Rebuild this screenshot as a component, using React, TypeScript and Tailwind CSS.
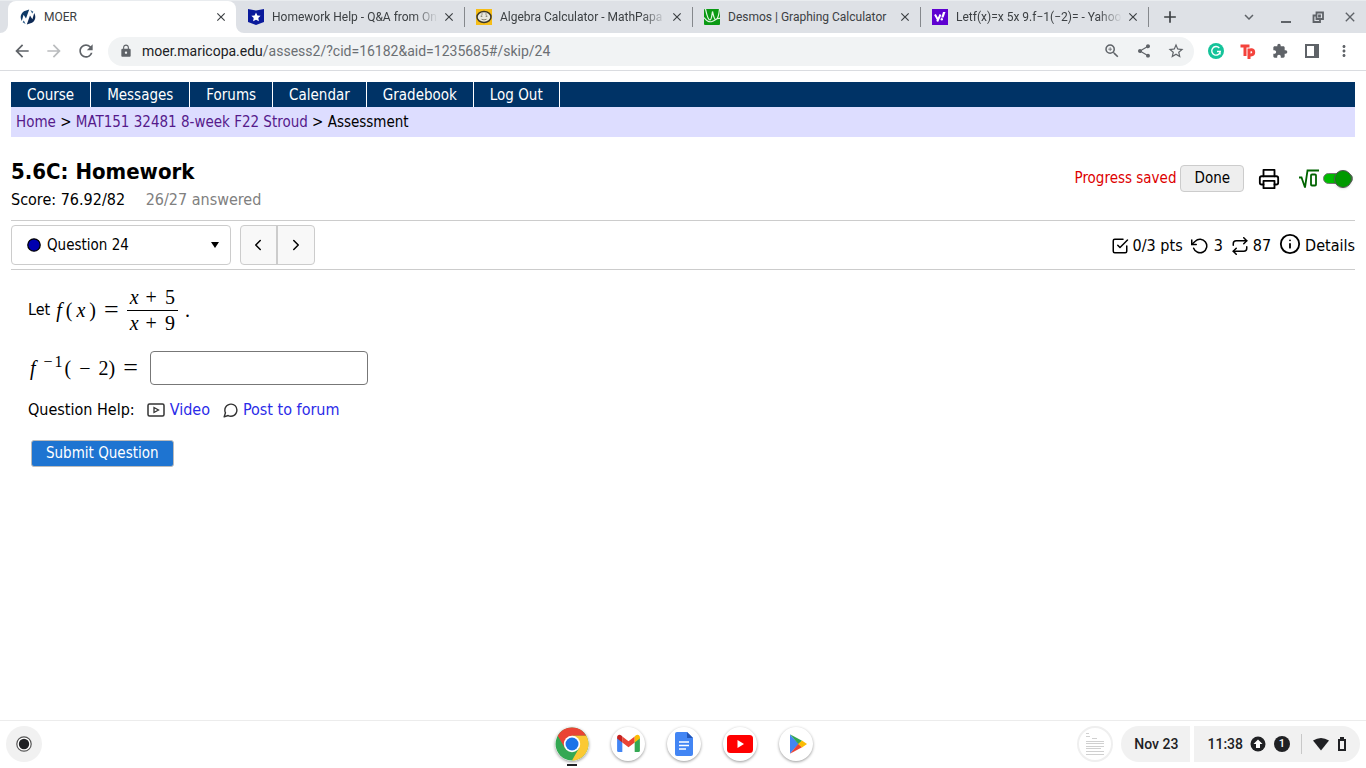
import type { ReactNode } from "react"
import {
  MdArrowBack,
  MdArrowForward,
  MdRefresh,
  MdLock,
  MdShare,
  MdStarBorder,
  MdExtension,
  MdMoreVert,
  MdClose,
  MdAdd,
  MdKeyboardArrowDown,
  MdZoomIn,
} from "react-icons/md"
import {
  FiPrinter,
  FiCheckSquare,
  FiRotateCcw,
  FiRepeat,
  FiInfo,
  FiMessageCircle,
  FiChevronLeft,
  FiChevronRight,
} from "react-icons/fi"

/* ---------- favicons ---------- */

function MoerIcon() {
  return (
    <svg viewBox="0 0 16 16" className="size-4 shrink-0">
      <path d="M4 2.2 9.2.5 6 9.5 3.6 5.8 1.8 12C-.3 8.5.6 4.5 4 2.2Z" fill="#0e3a66" />
      <path d="M12 13.8 6.8 15.5 10 6.5l2.4 3.7L14.2 4c2.1 3.5 1.2 7.5-2.2 9.8Z" fill="#0e2a55" />
      <path d="M3.8 11.5 5.6 15 2.6 13.2ZM12.2 4.5 10.4 1l3 1.8Z" fill="#2d5c88" />
    </svg>
  )
}

function StarShieldIcon() {
  return (
    <svg viewBox="0 0 16 16" className="size-4 shrink-0">
      <path d="M0 0l8 1.6L16 0v13l-8 3-8-3Z" fill="#0a1a9b" />
      <path d="M8 3.5l1.4 2.9 3.2.4-2.3 2.2.6 3.2L8 10.7l-2.9 1.5.6-3.2-2.3-2.2 3.2-.4Z" fill="#fff" />
    </svg>
  )
}

function MathPapaIcon() {
  return (
    <svg viewBox="0 0 16 16" className="size-4 shrink-0">
      <rect width="16" height="16" fill="#f6bd16" />
      <ellipse cx="8" cy="8" rx="7" ry="5.6" fill="#e9e8df" stroke="#3c3726" strokeWidth="1.5" />
      <path d="M5 5h2M9 5h2" stroke="#9a978a" />
      <circle cx="5.5" cy="7.2" r=".9" fill="#8d8a7a" />
      <circle cx="10.5" cy="7.2" r=".9" fill="#8d8a7a" />
      <path d="M5.5 10.3q2.5 1.2 5 0" stroke="#88846f" fill="none" />
    </svg>
  )
}

function DesmosIcon() {
  return (
    <svg viewBox="0 0 16 16" className="size-4 shrink-0">
      <rect width="16" height="16" rx="1" fill="#0a9a14" />
      <path
        d="M1.5 0C3 7 4.500 11 6 11S8 5 8.500 2.500C9.500 7 10.500 11 12 10.500S15 5 15.500 0M0 8.500c3 4 5 5 8 4s5-4 8-3"
        fill="none"
        stroke="#e3f7e3"
        strokeWidth="1.2"
      />
    </svg>
  )
}

function YahooIcon() {
  return (
    <svg viewBox="0 0 16 16" className="size-4 shrink-0">
      <rect width="16" height="16" fill="#5f01d1" />
      <path d="M3 5.500 5.800 10.500M8.500 5.500 5.200 12.500" fill="none" stroke="#fff" strokeWidth="2" />
      <path d="M11 3h2.500l-2 5.500H9.300Z" fill="#fff" />
      <circle cx="9.800" cy="10.300" r="1.200" fill="#fff" />
    </svg>
  )
}

const TABS: { title: string; icon: ReactNode }[] = [
  { title: "MOER", icon: <MoerIcon /> },
  { title: "Homework Help - Q&A from On", icon: <StarShieldIcon /> },
  { title: "Algebra Calculator - MathPapa", icon: <MathPapaIcon /> },
  { title: "Desmos | Graphing Calculator", icon: <DesmosIcon /> },
  { title: "Letf(x)=x 5x 9.f−1(−2)= - Yahoo", icon: <YahooIcon /> },
]

// titles too long for their tab fade out at the right
const FADED = [1, 2, 4]

function TabStrip() {
  return (
    <div className="flex h-[33px] border-t border-[#e9ecef] bg-[#dee1e6] pb-px pl-2">
      {TABS.map((tab, i) => (
        <div
          key={tab.title}
          className={`relative flex min-w-0 max-w-[228px] flex-1 items-center pr-2 pl-3 ${
            i === 0 ? "-mb-px rounded-t-lg bg-white pb-px" : ""
          }`}
        >
          {i === 0 && (
            <>
              <svg viewBox="0 0 8 8" className="absolute bottom-0 -left-2 size-2">
                <path d="M8 0v8H0a8 8 0 0 0 8-8Z" fill="#fff" />
              </svg>
              <svg viewBox="0 0 8 8" className="absolute -right-2 bottom-0 size-2">
                <path d="M0 0v8h8a8 8 0 0 1-8-8Z" fill="#fff" />
              </svg>
            </>
          )}
          {tab.icon}
          <span
            className={`ml-2 min-w-0 flex-1 overflow-hidden text-xs whitespace-nowrap text-[#3c4043] ${
              FADED.includes(i) ? "mask-r-from-[calc(100%-24px)]" : ""
            }`}
          >
            {tab.title}
          </span>
          <button aria-label={`Close ${tab.title}`} className="ml-1 text-[#3c4043]">
            <MdClose size={14} />
          </button>
          {i > 0 && <span className="absolute -right-px h-5 w-px bg-[#85888c]" />}
        </div>
      ))}
      <button aria-label="New tab" className="ml-3 text-[#3c4043]">
        <MdAdd size={20} />
      </button>
      <div className="ml-auto flex items-center gap-4 pr-2 text-[#5f6368]">
        <button aria-label="Search tabs" className="mr-1">
          <MdKeyboardArrowDown size={18} />
        </button>
        <button aria-label="Minimize">
          <svg viewBox="0 0 16 16" className="size-4">
            <path d="M3 12h10v2H3Z" fill="currentColor" />
          </svg>
        </button>
        <button aria-label="Restore">
          <svg viewBox="0 0 16 16" className="size-4" fill="none" stroke="currentColor" strokeWidth="1.800">
            <path d="M6.500 3.500H13V10H6.500ZM9 6.500h1v1H9ZM6 6.500H3.500v6.500H10V11" />
          </svg>
        </button>
        <button aria-label="Close window">
          <MdClose size={16} />
        </button>
      </div>
    </div>
  )
}

function Toolbar() {
  return (
    <div className="flex h-[38px] items-center border-b border-[#dadce0] pr-[14px] pb-px pl-3 text-[#5f6368]">
      <div className="flex gap-3 pr-3">
        <button aria-label="Back">
          <MdArrowBack size={20} />
        </button>
        <button aria-label="Forward" className="text-[#babcbe]">
          <MdArrowForward size={20} />
        </button>
        <button aria-label="Reload">
          <MdRefresh size={20} />
        </button>
      </div>
      <div className="flex h-[29px] min-w-0 flex-1 items-center rounded-full bg-[#f1f3f4] pr-[10px] pl-[11px]">
        <MdLock size={14} className="shrink-0" />
        <p className="ml-[9px] min-w-0 flex-1 truncate text-sm text-[#6b6f73]">
          <span className="text-[#202124]">moer.maricopa.edu</span>
          /assess2/?cid=16182&amp;aid=1235685#/skip/24
        </p>
        <div className="flex gap-4">
          <button aria-label="Zoom">
            <MdZoomIn size={18} className="-mx-px" />
          </button>
          <button aria-label="Share">
            <MdShare size={16} />
          </button>
          <button aria-label="Bookmark">
            <MdStarBorder size={18} className="-mx-px" />
          </button>
        </div>
      </div>
      <div className="ml-[14px] flex gap-4">
        <button aria-label="Grammarly">
          <svg viewBox="0 0 16 16" className="size-4">
            <circle cx="8" cy="8" r="8" fill="#15c39a" />
            <path d="M11.300 5A4.300 4.300 0 1 0 12.300 8.500H9M12 8.500v3" fill="none" stroke="#fff" strokeWidth="1.400" />
          </svg>
        </button>
        <button aria-label="Teleparty">
          <svg viewBox="0 0 16 16" className="size-4" fill="none" stroke="#f4433c" strokeWidth="3">
            <path d="M.5 3h9M5 3v10M9 5.500V16M9 7.800c1-1.700 4.700-1.500 4.700 1.500s-3.700 3.200-4.700 1.700" />
          </svg>
        </button>
        <button aria-label="Extensions">
          <MdExtension size={16} />
        </button>
        <button aria-label="Side panel">
          <svg viewBox="0 0 16 16" className="size-4">
            <path d="M1 1h14v14H1ZM3 3v10h7V3Z" fill="currentColor" fillRule="evenodd" />
          </svg>
        </button>
        <button aria-label="Menu">
          <MdMoreVert size={18} className="-mx-px" />
        </button>
      </div>
    </div>
  )
}

/* ---------- course page ---------- */

const NAV = ["Course", "Messages", "Forums", "Calendar", "Gradebook", "Log Out"]

function AssessmentHeader() {
  return (
    <header className="flex items-start justify-between pt-5 pb-2">
      <div>
        <h1 className="text-[22px] leading-[30px] font-bold">5.6C: Homework</h1>
        <p className="mt-px text-base leading-6">
          Score: 76.92/82 <span className="ml-4 text-[#808080]">26/27 answered</span>
        </p>
      </div>
      <div className="flex items-center pt-2 pr-[2px]">
        <span className="mr-1 text-[#dd0000]">Progress saved</span>
        <button className="h-[27px] rounded border border-[#ccc] bg-[#eee] px-[13px]">Done</button>
        <button aria-label="Print" className="ml-[14px]">
          <FiPrinter size={22} />
        </button>
        <label className="ml-[19px] flex items-center">
          <svg viewBox="0 0 20 20" className="size-5" fill="none" stroke="#006400" strokeWidth="1.800">
            <path d="M0 8.500h2.500L6 18.500 8.500 1.500H20" />
            <rect x="12" y="5.500" width="5" height="11" rx="1" />
          </svg>
          <input type="checkbox" role="switch" aria-label="Math input editor" defaultChecked className="sr-only" />
          <span className="ml-1 flex h-[11px] w-[30px] items-center justify-end rounded-full border border-[#777] bg-[#00bb00]">
            <span className="size-[18px] shrink-0 rounded-full border border-[#555] bg-[#009900] shadow" />
          </span>
        </label>
      </div>
    </header>
  )
}

function QuestionBar() {
  return (
    <div className="flex items-center justify-between border-y border-[#ccc] py-1">
      <div className="flex h-10 gap-[9px]">
        <div className="flex w-[220px] items-center rounded border border-[#ccc] pr-[10px] pl-[15px]">
          <svg viewBox="0 0 14 14" className="size-[14px]">
            <circle cx="7" cy="7" r="6.200" fill="#0000b0" stroke="#000" strokeWidth="1.300" />
          </svg>
          <select aria-label="Question" className="ml-[6px] min-w-0 flex-1 appearance-none bg-transparent">
            <option>Question 24</option>
          </select>
          <svg viewBox="0 0 10 6" className="h-[6px] w-[10px]">
            <path d="M1 0h8L5 6Z" />
          </svg>
        </div>
        <div className="flex divide-x-2 divide-[#ccc] rounded border border-[#ccc] bg-[#f8f8f8]">
          <button aria-label="Previous question" className="w-[37px] pl-2">
            <FiChevronLeft size={18} />
          </button>
          <button aria-label="Next question" className="w-[36px] pl-[9px]">
            <FiChevronRight size={18} />
          </button>
        </div>
      </div>
      <div className="flex items-center pt-[2px] text-base">
        <FiCheckSquare size={18} />
        <span className="ml-1">0/3 pts</span>
        <FiRotateCcw size={18} className="ml-2" />
        <span className="ml-[5px]">3</span>
        <FiRepeat size={18} className="ml-2" />
        <span className="ml-1">87</span>
        <button className="ml-2 flex items-center">
          <FiInfo size={22} className="mb-1" />
          <span className="ml-1">Details</span>
        </button>
      </div>
    </div>
  )
}

function Question() {
  return (
    <section className="px-[17px] pt-[14px]">
      <div className="flex items-center">
        <span className="mr-1 text-base">Let</span>
        <div className="flex items-center font-['Liberation_Serif',serif] text-xl">
          <i className="pr-1 pl-[2px]">f</i>(<i className="px-1">x</i>)
          <span className="mx-2 text-[26px] leading-none">=</span>
          <span className="flex flex-col text-center leading-[26px]">
            <span className="border-b border-black px-[3px]">
              <i className="mr-[7px]">x</i>+<span className="ml-2">5</span>
            </span>
            <span className="px-[3px] leading-6">
              <i className="mr-[7px]">x</i>+<span className="ml-2">9</span>
            </span>
          </span>
          <span className="ml-[7px]">.</span>
        </div>
      </div>

      <label className="mt-4 flex items-center">
        <span className="flex items-center font-['Liberation_Serif',serif] text-xl">
          <i className="pr-1 pl-[2px]">f</i>
          <span className="-mt-3 mr-[2px] ml-1 flex gap-[2px] text-base">
            <span>−</span>1
          </span>
          (<span className="mx-2">−</span>2)
          <span className="mx-2 text-[26px] leading-none">=</span>
        </span>
        <input type="text" className="ml-1 h-[34px] w-[218px] rounded border border-[#777] px-2" />
      </label>

      <p className="mt-[15px] flex items-center text-base leading-5">
        Question Help:
        <a href="#video" className="ml-3 flex items-center text-[#2b2be8]">
          <svg viewBox="0 0 18 14" className="mr-[5px] h-[14px] w-[18px]" fill="none" stroke="#333" strokeWidth="1.500">
            <rect x="1" y="1" width="16" height="12" rx="1.500" />
            <path d="M7 4.500v5L11.500 7Z" strokeWidth="1.300" />
          </svg>
          Video
        </a>
        <a href="#forum" className="ml-3 flex items-center text-[#2b2be8]">
          <FiMessageCircle size={17} className="mr-1 text-[#333]" />
          Post to forum
        </a>
      </p>

      <button className="mt-5 ml-[3px] h-[27px] rounded-[3px] border border-[#bbb] bg-[#1e74d1] px-[14px] text-white">
        Submit Question
      </button>
    </section>
  )
}

/* ---------- shelf ---------- */

function ChromeIcon() {
  return (
    <svg viewBox="0 0 34 34" className="size-[34px]">
      <circle cx="17" cy="17" r="16.500" fill="#34a853" />
      <path d="M2.700 8.800A16.500 16.500 0 0 1 31.300 8.800H17L9.900 21.100Z" fill="#ea4335" />
      <path d="M31.300 8.800A16.500 16.500 0 0 1 17 33.500L24.100 21.100 17 8.800Z" fill="#fbc934" />
      <circle cx="17" cy="17" r="8.200" fill="#fff" />
      <circle cx="17" cy="17" r="6.500" fill="#1a73e8" />
    </svg>
  )
}

function GmailIcon() {
  return (
    <svg viewBox="0 0 26 20" className="h-[19px] w-[25px]">
      <path d="M1 4v13.500Q1 19 2.500 19H6.500V8Z" fill="#4285f4" />
      <path d="M25 4v13.500Q25 19 23.500 19H19.500V8Z" fill="#34a853" />
      <path d="M6.500 2.500 13 7.500l6.500-5V9L13 14 6.500 9Z" fill="#ea4335" />
      <path d="M1 3.500C1 .8 3.800 0 5.500 1.700l1 .8V9L1 4.800Z" fill="#c5221f" />
      <path d="M25 3.500C25 .8 22.200 0 20.500 1.700l-1 .8V9L25 4.800Z" fill="#fbbc04" />
    </svg>
  )
}

function DocsIcon() {
  return (
    <svg viewBox="0 0 18 24" className="h-6 w-[18px]">
      <path d="M2 0h10l6 6v16q0 2-2 2H2q-2 0-2-2V2Q0 0 2 0Z" fill="#4285f4" />
      <path d="M12 0v6h6Z" fill="#2155b8" />
      <path d="M4 10h10M4 13.500h10M4 17h7" stroke="#fff" strokeWidth="1.500" />
    </svg>
  )
}

function YouTubeIcon() {
  return (
    <svg viewBox="0 0 26 18" className="h-[18px] w-[26px]">
      <rect width="26" height="18" rx="3.500" fill="#f00" />
      <path d="M10.500 5v8l6.500-4Z" fill="#fff" />
    </svg>
  )
}

function PlayIcon() {
  return (
    <svg viewBox="0 0 18 20" className="ml-1 h-5 w-[18px]">
      <path d="M1 .5 10 10 1 19.500Z" fill="#4285f4" />
      <path d="M1 .3 13 6.800 9.500 10.300Z" fill="#34a853" />
      <path d="M1 19.700 13 13.200 9.500 9.700Z" fill="#ea4335" />
      <path d="M13 6.500 18 10l-5 3.500L9 10Z" fill="#fbbc04" />
    </svg>
  )
}

const APPS: { name: string; icon: ReactNode }[] = [
  { name: "Chrome", icon: <ChromeIcon /> },
  { name: "Gmail", icon: <GmailIcon /> },
  { name: "Docs", icon: <DocsIcon /> },
  { name: "YouTube", icon: <YouTubeIcon /> },
  { name: "Play Store", icon: <PlayIcon /> },
]

function Shelf() {
  return (
    <footer className="grid h-12 grid-cols-[1fr_auto_1fr] items-center border-t border-[#ececec] px-[6px] pb-[2px] font-[Roboto,sans-serif] text-[#202124]">
      <button aria-label="Launcher" className="grid size-9 place-items-center rounded-full bg-[#f1f1f1]">
        <svg viewBox="0 0 16 16" className="size-4">
          <circle cx="8" cy="8" r="7.200" fill="#fff" stroke="#555" strokeWidth="1.200" />
          <circle cx="8" cy="8" r="5.200" fill="#202124" />
        </svg>
      </button>
      <div className="flex gap-[22px] pl-[2px]">
        {APPS.map((app, i) => (
          <button
            key={app.name}
            aria-label={app.name}
            className="relative grid size-[34px] place-items-center rounded-full bg-white shadow-[0_1px_3px_rgba(0,0,0,0.4)]"
          >
            {app.icon}
            {i === 0 && <span className="absolute -bottom-[5px] left-3 h-[2px] w-[10px] bg-[#202124]" />}
          </button>
        ))}
      </div>
      <div className="flex items-center justify-end text-sm font-medium">
        <button
          aria-label="Recent file"
          className="mr-2 grid size-9 place-items-center rounded-full border-2 border-[#efefef]"
        >
          <svg viewBox="0 0 20 26" className="h-[26px] w-5" stroke="#d0d0d0">
            <path d="M1 2.500h3M1 5.500h4M7 7.500h5M1 10.500h18M1 12.500h18M1 15.500h18M1 17.500h15M1 20.500h18M1 23.500h18" />
          </svg>
        </button>
        <button className="h-9 rounded-l-full rounded-r bg-[#f1f1f1] pr-3 pl-[13px]">Nov 23</button>
        <button className="ml-1 flex h-9 items-center rounded-l rounded-r-full bg-[#f1f1f1] pr-[13px] pl-[13px]">
          11:38
          <svg viewBox="0 0 16 16" className="ml-[7px] size-4">
            <circle cx="8" cy="8" r="7.500" fill="#202124" />
            <path d="M8 3.500 12.500 8H10v4H6V8H3.500Z" fill="#fff" />
          </svg>
          <span className="ml-2 grid size-4 place-items-center rounded-full bg-[#202124] text-[11px] text-white">1</span>
          <span className="mx-[11px] h-5 w-px bg-[#c8c8c8]" />
          <svg viewBox="0 0 16 14" className="h-[14px] w-4">
            <path d="M0 3.500Q8-1.500 16 3.500L8 13.500Z" fill="#202124" />
          </svg>
          <svg viewBox="0 0 10 16" className="ml-2 h-4 w-[10px]">
            <path d="M3 1h4v2H3ZM1 3h8v12H1ZM3 5v8h4V5Z" fill="#202124" fillRule="evenodd" />
          </svg>
        </button>
      </div>
    </footer>
  )
}

export default function App() {
  return (
    <div className="flex min-h-screen flex-col bg-white text-black">
      <div className="font-[Roboto,sans-serif]">
        <TabStrip />
        <Toolbar />
      </div>
      <main className="flex-1 px-[11px] pt-[11px] font-['DejaVu_Sans_Condensed','Noto_Sans',sans-serif] text-[15px]">
        <nav className="flex h-[25px] bg-[#003366] text-white">
          {NAV.map((item) => (
            <a key={item} href={`#${item}`} className="border-r border-white px-4 leading-[26px]">
              {item}
            </a>
          ))}
        </nav>
        <div className="bg-[#ddddff] px-[5px] pt-px leading-[29px]">
          <a href="#home" className="text-[#551a8b]">Home</a> &gt;{" "}
          <a href="#class" className="text-[#551a8b]">MAT151 32481 8-week F22 Stroud</a> &gt; Assessment
        </div>
        <AssessmentHeader />
        <QuestionBar />
        <Question />
      </main>
      <Shelf />
    </div>
  )
}
